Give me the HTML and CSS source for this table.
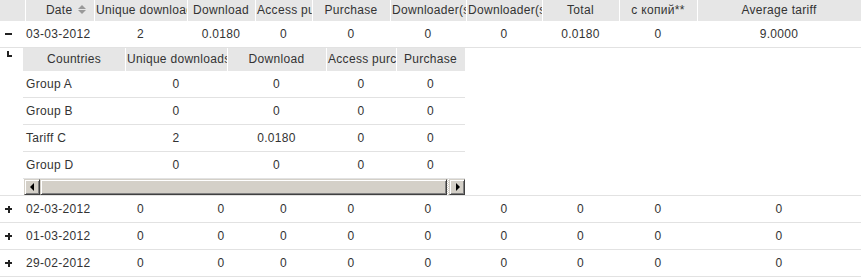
FILE: index.html
```html
<!DOCTYPE html>
<html>
<head>
<meta charset="utf-8">
<link rel="stylesheet" href="styles.css">
</head>
<body>
<div class="grid">
  <div class="row head">
    <div class="c"></div>
    <div class="c date-h">Date <span class="sort"><i class="up"></i><i class="down"></i></span></div>
    <div class="c">Unique downloads</div>
    <div class="c">Download</div>
    <div class="c">Access purchase</div>
    <div class="c">Purchase</div>
    <div class="c">Downloader(s)</div>
    <div class="c">Downloader(s)</div>
    <div class="c">Total</div>
    <div class="c">с копий**</div>
    <div class="c">Average tariff</div>
  </div>

  <div class="row">
    <div class="c tg"><span class="minus"></span></div>
    <div class="c dt">03-03-2012</div>
    <div class="c">2</div>
    <div class="c">0.0180</div>
    <div class="c">0</div>
    <div class="c">0</div>
    <div class="c">0</div>
    <div class="c">0</div>
    <div class="c">0.0180</div>
    <div class="c">0</div>
    <div class="c">9.0000</div>
  </div>

  <div class="detail">
    <div class="d-icon"><span class="corner"></span></div>
    <div class="sub">
      <div class="srow shead">
        <div class="c">Countries</div>
        <div class="c">Unique downloads</div>
        <div class="c">Download</div>
        <div class="c">Access purchase</div>
        <div class="c">Purchase</div>
      </div>
      <div class="srow">
        <div class="c cn">Group A</div><div class="c">0</div><div class="c">0</div><div class="c">0</div><div class="c">0</div>
      </div>
      <div class="srow">
        <div class="c cn">Group B</div><div class="c">0</div><div class="c">0</div><div class="c">0</div><div class="c">0</div>
      </div>
      <div class="srow">
        <div class="c cn">Tariff C</div><div class="c">2</div><div class="c">0.0180</div><div class="c">0</div><div class="c">0</div>
      </div>
      <div class="srow">
        <div class="c cn">Group D</div><div class="c">0</div><div class="c">0</div><div class="c">0</div><div class="c">0</div>
      </div>
      <div class="hscroll">
        <div class="sb-btn"><span class="tri-l"></span></div>
        <div class="sb-thumb"></div>
        <div class="sb-track"></div>
        <div class="sb-btn"><span class="tri-r"></span></div>
      </div>
    </div>
  </div>

  <div class="row">
    <div class="c tg"><span class="plus"></span></div>
    <div class="c dt">02-03-2012</div>
    <div class="c">0</div><div class="c">0</div><div class="c">0</div><div class="c">0</div><div class="c">0</div><div class="c">0</div><div class="c">0</div><div class="c">0</div><div class="c">0</div>
  </div>
  <div class="row">
    <div class="c tg"><span class="plus"></span></div>
    <div class="c dt">01-03-2012</div>
    <div class="c">0</div><div class="c">0</div><div class="c">0</div><div class="c">0</div><div class="c">0</div><div class="c">0</div><div class="c">0</div><div class="c">0</div><div class="c">0</div>
  </div>
  <div class="row">
    <div class="c tg"><span class="plus"></span></div>
    <div class="c dt">29-02-2012</div>
    <div class="c">0</div><div class="c">0</div><div class="c">0</div><div class="c">0</div><div class="c">0</div><div class="c">0</div><div class="c">0</div><div class="c">0</div><div class="c">0</div>
  </div>
</div>
</body>
</html>
```

FILE: styles.css
```css
html, body {
  margin: 0;
  padding: 0;
  background: #fff;
}
body {
  font-family: "Liberation Sans", Arial, sans-serif;
  font-size: 12px;
  letter-spacing: 0.3px;
  color: #333;
}
.grid {
  width: 861px;
}
.row {
  display: grid;
  grid-template-columns: 25px 69px 93px 68px 57px 78px 76px 76px 77px 78px 164px;
  height: 26px;
  border-bottom: 1px solid #e2e2e2;
}
.c {
  overflow: hidden;
  white-space: nowrap;
  text-align: center;
  line-height: 26px;
  padding: 0 2px;
  box-sizing: border-box;
}
.row.head {
  height: 21px;
  border-bottom: 0;
  background: #e6e6e6;
}
.row.head .c {
  line-height: 21px;
  box-shadow: inset 1px 0 #fff;
}
.row.head .c:first-child {
  box-shadow: none;
}
.date-h {
  padding-left: 15px !important;
}
.sort {
  display: inline-flex;
  flex-direction: column;
  gap: 1px;
  vertical-align: middle;
  margin-left: 2px;
  position: relative;
  top: -1px;
}
.sort i {
  display: block;
  width: 0;
  height: 0;
  border-left: 4px solid transparent;
  border-right: 4px solid transparent;
}
.sort .up {
  border-bottom: 4px solid #999;
}
.sort .down {
  border-top: 4px solid #999;
}
.dt {
  text-align: left;
  padding-left: 1px;
}
.tg {
  display: flex;
  align-items: center;
  padding-left: 5px;
}
.minus {
  display: block;
  width: 7px;
  height: 2px;
  background: #222;
}
.plus {
  display: block;
  width: 7px;
  height: 7px;
  background:
    linear-gradient(#222, #222) center / 7px 2px no-repeat,
    linear-gradient(#222, #222) center / 2px 7px no-repeat;
}
.detail {
  display: flex;
  border-bottom: 1px solid #e2e2e2;
}
.d-icon {
  width: 23px;
  flex: none;
  padding: 3px 0 0 7px;
  box-sizing: border-box;
}
.corner {
  display: block;
  width: 3px;
  height: 4px;
  border-left: 2px solid #222;
  border-bottom: 2px solid #222;
}
.sub {
  width: 442px;
}
.srow {
  display: grid;
  grid-template-columns: 102px 102px 99px 70px 69px;
  height: 26px;
  border-bottom: 1px solid #e2e2e2;
}
.srow.shead {
  height: 23px;
  border-bottom: 0;
  background: #e6e6e6;
}
.srow.shead .c {
  line-height: 23px;
  box-shadow: inset 1px 0 #fff;
}
.srow.shead .c:first-child {
  box-shadow: none;
}
.srow .cn {
  text-align: left;
  padding-left: 3px;
}
.hscroll {
  display: flex;
  height: 16px;
  margin-left: 1px;
}
.sb-btn,
.sb-thumb {
  height: 16px;
  box-sizing: border-box;
  background: #d4d0c8;
  border: 1px solid;
  border-color: #d4d0c8 #404040 #404040 #d4d0c8;
  box-shadow: inset 1px 1px #fff, inset -1px -1px #808080;
}
.sb-btn {
  width: 16px;
  flex: none;
  display: flex;
  align-items: center;
  justify-content: center;
}
.sb-thumb {
  flex: 1;
}
.sb-track {
  width: 2px;
  flex: none;
  background: repeating-conic-gradient(#fff 0 25%, #d4d0c8 0 50%) 0 0 / 2px 2px;
}
.tri-l,
.tri-r {
  display: block;
  width: 0;
  height: 0;
  border-top: 4px solid transparent;
  border-bottom: 4px solid transparent;
}
.tri-l {
  border-right: 4px solid #000;
  margin-left: -1px;
}
.tri-r {
  border-left: 4px solid #000;
  margin-left: 1px;
}
```
